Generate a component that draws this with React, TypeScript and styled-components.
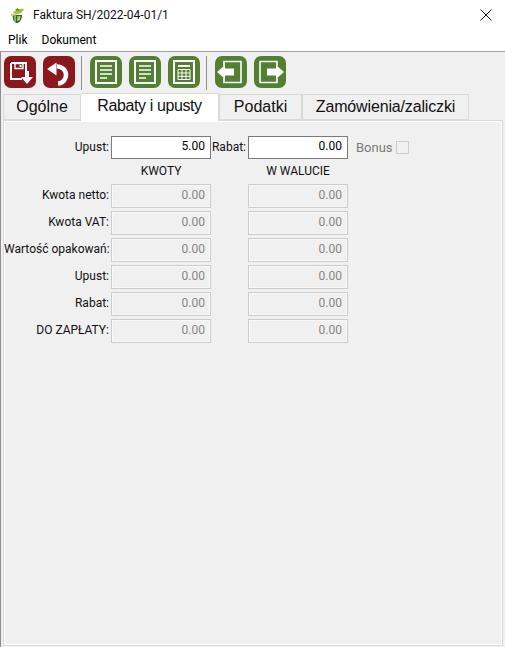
import React from 'react';
import styled, { createGlobalStyle } from 'styled-components';

const GlobalStyle = createGlobalStyle`
  html, body {
    margin: 0;
    padding: 0;
    background: #ffffff;
  }
  * {
    box-sizing: border-box;
  }
`;

const Window = styled.div`
  width: 505px;
  height: 647px;
  display: flex;
  flex-direction: column;
  background: #f0f0f0;
  font-family: Roboto, 'Liberation Sans', sans-serif;
  font-size: 12px;
  color: #000;
  overflow: hidden;
`;

const TitleBar = styled.div`
  height: 30px;
  flex: none;
  display: flex;
  align-items: center;
  padding-left: 10px;
  background: #fff;
`;

const TitleText = styled.span`
  margin-left: 7px;
  font-size: 12px;
  flex: 1;
  color: #111;
`;

const CloseButton = styled.div`
  width: 46px;
  height: 30px;
  margin-right: -4px;
  display: flex;
  align-items: center;
  justify-content: center;
`;

const MenuBar = styled.div`
  height: 22px;
  flex: none;
  display: flex;
  align-items: center;
  gap: 14px;
  padding: 0 0 2px 8px;
  background: #fff;
  border-bottom: 1px solid #a0a0a0;
`;

const MenuItem = styled.span`
  font-size: 12px;
`;

const Body = styled.div`
  flex: 1;
  display: flex;
  flex-direction: column;
  border-left: 1px solid #8c8c8c;
`;

const Toolbar = styled.div`
  height: 41px;
  flex: none;
  display: flex;
  align-items: flex-start;
  padding: 4px 0 0 3px;
`;

const ToolGroup = styled.div`
  display: flex;
  gap: 7px;
`;

const ToolSeparator = styled.div`
  width: 1px;
  height: 34px;
  margin: 0 8px 0 6px;
  background: #8f8f8f;
`;

const ToolIcon = styled.svg`
  display: block;
  width: 32px;
  height: 32px;
`;

const TabStrip = styled.div`
  height: 27px;
  flex: none;
  display: flex;
  align-items: flex-end;
  padding-left: 2px;
  position: relative;
  z-index: 1;
`;

const Tab = styled.div<{ $active?: boolean; $width: number; $spacing?: number }>`
  width: ${(p) => p.$width}px;
  height: ${(p) => (p.$active ? 28 : 26)}px;
  margin-bottom: ${(p) => (p.$active ? -1 : 0)}px;
  padding-top: 2px;
  display: flex;
  justify-content: center;
  align-items: flex-start;
  font-family: 'Liberation Sans', Arial, sans-serif;
  font-size: 16px;
  line-height: 20px;
  letter-spacing: ${(p) => p.$spacing ?? 0}px;
  color: #111;
  background: ${(p) => (p.$active ? '#fff' : '#f0f0f0')};
  border: 1px solid #d9d9d9;
  border-bottom: ${(p) => (p.$active ? 'none' : '1px solid #d9d9d9')};
  border-left: ${(p) => (p.$active ? 'none' : '1px solid #d9d9d9')};
`;

const Panel = styled.div`
  height: 526px;
  margin: 0 2px 0 2px;
  padding: 15px 0 0 0;
  background: #f0f0f0;
  border: 1px solid #d9d9d9;
  box-shadow: inset 1px 1px 0 #fff, inset -1px -1px 0 #fff;
`;

const FormGrid = styled.div`
  display: grid;
  grid-template-columns: 105px 100px 37px 100px auto;
  grid-template-rows: 23px 19px repeat(6, 24px);
  row-gap: 3px;
  align-items: center;
`;

const FieldLabel = styled.span`
  grid-column: 1;
  text-align: right;
  white-space: nowrap;
  font-size: 12px;
  color: #111;
  padding-bottom: 2px;
`;

const InlineLabel = styled.span`
  text-align: right;
  font-size: 12px;
  color: #111;
  padding-bottom: 2px;
`;

const Input = styled.div`
  height: 23px;
  margin-left: 2px;
  margin-right: -2px;
  padding: 0 5px 3px 0;
  display: flex;
  align-items: center;
  justify-content: flex-end;
  background: #fff;
  border: 1px solid #7a7a7a;
  font-size: 12px;
`;

const ReadOnlyField = styled(Input)`
  height: 24px;
  background: #f0f0f0;
  border: 1px solid #cccccc;
  box-shadow: inset 0 0 0 1px #f8f8f8;
  color: #858585;
`;

const Heading = styled.span`
  text-align: center;
  font-size: 12px;
  color: #111;
  padding-left: 4px;
  padding-bottom: 2px;
`;

const BonusGroup = styled.div`
  display: flex;
  align-items: center;
  gap: 3px;
  margin-left: 10px;
  font-size: 13px;
  color: #7a7a7a;
`;

const CheckBox = styled.span`
  width: 13px;
  height: 13px;
  background: #f0f0f0;
  border: 1px solid #cccccc;
`;

const MAROON = '#8a181c';
const GREEN = '#527f32';

const Plate = ({ color, children }: { color: string; children: React.ReactNode }) => (
  <ToolIcon viewBox="0 0 32 32">
    <rect width="32" height="32" rx="7" fill={color} />
    {children}
  </ToolIcon>
);

const SaveIcon = () => (
  <Plate color={MAROON}>
    <path d="M7 7h15v9M7 7v16h11" fill="none" stroke="#fff" strokeWidth="2" />
    <path d="M11 7.5h8v5h-8z" fill="none" stroke="#fff" strokeWidth="1.4" />
    <rect x="15.5" y="9" width="2" height="2" fill="#fff" />
    <path d="M21 15h4v6h4L23 28l-6-7h4z" fill="#fff" />
  </Plate>
);

const UndoIcon = () => (
  <Plate color={MAROON}>
    <path d="M14 10.5a8.5 8.5 0 1 1 1 17" fill="none" stroke="#fff" strokeWidth="4.5" />
    <path d="M4 13 13.5 6.5v13z" fill="#fff" />
  </Plate>
);

const DocIcon = () => (
  <Plate color={GREEN}>
    <rect x="6" y="5" width="20" height="22" fill="none" stroke="#fff" strokeWidth="2" />
    <path d="M10 10h12M10 14h12M10 18h12M10 22h7" stroke="#fff" strokeWidth="1.6" />
  </Plate>
);

const TableIcon = () => (
  <Plate color={GREEN}>
    <rect x="6" y="5" width="20" height="22" fill="none" stroke="#fff" strokeWidth="2" />
    <path d="M10 10h12" stroke="#fff" strokeWidth="2" />
    <path d="M10 13.5h12v10H10zM10 17h12M10 20.3h12M14 13.5v10M18 13.5v10" fill="none" stroke="#fff" strokeWidth="1" />
  </Plate>
);

const PrevIcon = () => (
  <Plate color={GREEN}>
    <path d="M9 10V5.5h17v21H9V22" fill="none" stroke="#fff" strokeWidth="1.6" />
    <path d="M2 16 10 9v3.5h9v7h-9V23z" fill="#fff" />
  </Plate>
);

const NextIcon = () => (
  <Plate color={GREEN}>
    <path d="M23 10V5.5H6v21h17V22" fill="none" stroke="#fff" strokeWidth="1.6" />
    <path d="M30 16 22 9v3.5h-9v7h9V23z" fill="#fff" />
  </Plate>
);

const AppLogo = () => (
  <svg width="16" height="17" viewBox="0 0 16 17">
    <path d="M3 6c2-3 6-5 11-4-1 3-4 5-8 5z" fill="#9ac43c" />
    <path d="M5 3l3-2 1 3z" fill="#4f8a2a" />
    <path d="M3 8h9c0 4-2 8-5 8S2 12 3 8z" fill="#2f6a22" />
    <path d="M5 9v6M8 9v5M10 9l-1 4" stroke="#e2e6a0" strokeWidth="1.1" />
    <path d="M1 8h5" stroke="#d8b83a" strokeWidth="1.5" />
  </svg>
);

const rows = ['Kwota netto:', 'Kwota VAT:', 'Wartość opakowań:', 'Upust:', 'Rabat:', 'DO ZAPŁATY:'];

export default function App() {
  return (
    <Window>
      <GlobalStyle />
      <TitleBar>
        <AppLogo />
        <TitleText>Faktura SH/2022-04-01/1</TitleText>
        <CloseButton>
          <svg width="12" height="12" viewBox="0 0 12 12">
            <path d="M.5.5l11 11M11.5.5l-11 11" stroke="#111" strokeWidth="1" />
          </svg>
        </CloseButton>
      </TitleBar>
      <MenuBar>
        <MenuItem>Plik</MenuItem>
        <MenuItem>Dokument</MenuItem>
      </MenuBar>
      <Body>
        <Toolbar>
          <ToolGroup>
            <SaveIcon />
            <UndoIcon />
          </ToolGroup>
          <ToolSeparator />
          <ToolGroup>
            <DocIcon />
            <DocIcon />
            <TableIcon />
          </ToolGroup>
          <ToolSeparator />
          <ToolGroup>
            <PrevIcon />
            <NextIcon />
          </ToolGroup>
        </Toolbar>
        <TabStrip>
          <Tab $width={78}>Ogólne</Tab>
          <Tab $width={138} $active $spacing={-0.4}>Rabaty i upusty</Tab>
          <Tab $width={83}>Podatki</Tab>
          <Tab $width={167} $spacing={-0.15}>Zamówienia/zaliczki</Tab>
        </TabStrip>
        <Panel>
          <FormGrid>
            <FieldLabel>Upust:</FieldLabel>
            <Input>5.00</Input>
            <InlineLabel>Rabat:</InlineLabel>
            <Input>0.00</Input>
            <BonusGroup>
              Bonus
              <CheckBox />
            </BonusGroup>

            <span />
            <Heading>KWOTY</Heading>
            <span />
            <Heading>W WALUCIE</Heading>
            <span />

            {rows.map((label) => (
              <React.Fragment key={label}>
                <FieldLabel>{label}</FieldLabel>
                <ReadOnlyField>0.00</ReadOnlyField>
                <span />
                <ReadOnlyField>0.00</ReadOnlyField>
                <span />
              </React.Fragment>
            ))}
          </FormGrid>
        </Panel>
      </Body>
    </Window>
  );
}
